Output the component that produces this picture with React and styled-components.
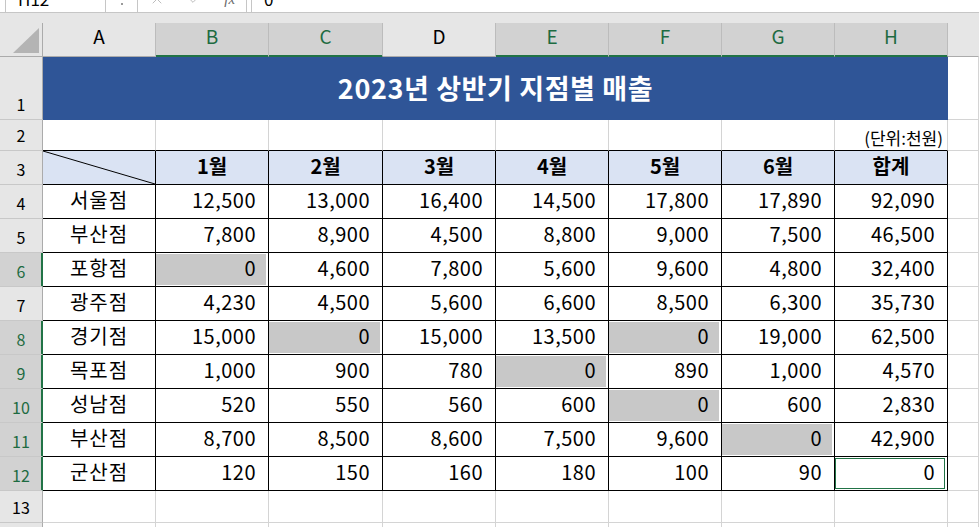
import React from 'react'
import styled, { createGlobalStyle } from 'styled-components'
import { X, Check } from 'lucide-react'

const GREEN = '#217346'
const GREEN_TEXT = '#1D6B41'
const GRID = '#D4D4D4'
const BLACK = '#000'

const GlobalStyle = createGlobalStyle`
  html, body {
    margin: 0;
    padding: 0;
    height: 100%;
    overflow: hidden;
    background: #fff;
  }
  body {
    font-family: "Noto Sans CJK KR", "Noto Sans", sans-serif;
    color: #000;
  }
  #root {
    height: 100%;
    display: flex;
    flex-direction: column;
  }
`

const FormulaBar = styled.div`
  display: flex;
  align-items: flex-end;
  flex-shrink: 0;
  height: 12px;
  overflow: hidden;
  background: #fff;
`

const NameBox = styled.div`
  flex: none;
  box-sizing: border-box;
  width: 101px;
  height: 24px;
  margin-left: 5px;
  padding-left: 12px;
  border: 1px solid #C6C6C6;
  border-bottom: 0;
  font-size: 17px;
  line-height: 20px;
`

const Dots = styled.div`
  flex: none;
  width: 2px;
  height: 2px;
  margin: 0 14px 7px 15px;
  background: #9A9A9A;
`

const IconBox = styled.div`
  flex: none;
  box-sizing: border-box;
  display: flex;
  align-items: flex-start;
  justify-content: space-around;
  width: 110px;
  height: 24px;
  padding-top: 2px;
  border: 1px solid #C6C6C6;
  border-bottom: 0;
  color: #BDBDBD;
`

const Fx = styled.span`
  font-family: "Liberation Serif", serif;
  font-style: italic;
  font-size: 15px;
  line-height: 16px;
  color: #6A6A6A;
`

const FormulaInput = styled.div`
  flex: 1;
  box-sizing: border-box;
  height: 24px;
  margin-left: 4px;
  padding-left: 12px;
  border: 1px solid #C6C6C6;
  border-bottom: 0;
  border-right: 0;
  font-size: 17px;
  line-height: 20px;
`

const Strip = styled.div`
  flex-shrink: 0;
  box-sizing: border-box;
  height: 11px;
  background: #E6E6E6;
  border-top: 1px solid #C6C6C6;
`

const Sheet = styled.div`
  flex: 1;
  min-height: 0;
  display: grid;
  grid-template-columns: 43px 113px 113px 114px 113px 113px 113px 113px 113px 1fr;
  grid-template-rows: 34px 63px 31px 34px repeat(9, 34px) 32px 1fr;
  overflow: hidden;
`

const Corner = styled.div`
  box-sizing: border-box;
  display: flex;
  justify-content: flex-end;
  align-items: flex-end;
  padding: 0 3px 3px 0;
  background: #E6E6E6;
  border-right: 1px solid #ABABAB;
  border-bottom: 1px solid #ABABAB;
`

const ColHead = styled.div`
  box-sizing: border-box;
  display: flex;
  justify-content: center;
  align-items: flex-start;
  padding-top: 3px;
  font-size: 19px;
  line-height: 19px;
  background: ${p => p.$selected ? '#D2D2D2' : '#E6E6E6'};
  color: ${p => p.$selected ? GREEN_TEXT : '#000'};
  border-right: 1px solid ${p => p.$blank ? '#E6E6E6' : '#BCBCBC'};
  border-bottom: 1px solid ${p => p.$selected ? GREEN : '#ABABAB'};
  box-shadow: ${p => p.$selected ? `inset 0 -1px 0 ${GREEN}` : 'none'};
`

const RowHead = styled.div`
  box-sizing: border-box;
  overflow: hidden;
  display: flex;
  justify-content: center;
  align-items: flex-end;
  padding-bottom: 7px;
  font-size: 16px;
  line-height: 16px;
  background: ${p => p.$selected ? '#D2D2D2' : '#E6E6E6'};
  color: ${p => p.$selected ? GREEN_TEXT : '#000'};
  border-right: 1px solid ${p => p.$selected ? GREEN : '#ABABAB'};
  border-bottom: 1px solid #C8C8C8;
  box-shadow: ${p => p.$selected ? `inset -1px 0 0 ${GREEN}` : 'none'};
`

const justify = { left: 'flex-start', center: 'center', right: 'flex-end' }

const Cell = styled.div`
  position: relative;
  box-sizing: border-box;
  overflow: hidden;
  display: flex;
  align-items: ${p => p.$valign === 'bottom' ? 'flex-end' : 'center'};
  justify-content: ${p => justify[p.$align || 'left']};
  padding: 0 ${p => p.$pad || 0}px ${p => p.$valign === 'bottom' ? 2 : 4}px 0;
  font-size: ${p => p.$small ? 17 : 20}px;
  line-height: 20px;
  font-weight: ${p => p.$bold ? 700 : 400};
  letter-spacing: ${p => p.$spaced ? '1px' : p.$num ? '0.5px' : '0'};
  white-space: nowrap;
  background: ${p => p.$fill || '#fff'};
  border-right: 1px solid ${p => p.$rightLine};
  border-bottom: 1px solid ${p => p.$bottomLine};
  box-shadow: ${p => p.$active
    ? `inset 0 1px 0 #fff, inset 0 -1px 0 #fff, inset -2px 0 0 #fff, inset 0 2px 0 ${GREEN}, inset 0 -2px 0 ${GREEN}, inset -3px 0 0 ${GREEN}, inset 1px 0 0 ${GREEN}`
    : p.$fill ? 'inset 0 1px 0 #fff, inset 0 -1px 0 #fff, inset -2px 0 0 #fff' : 'none'};
`

const TitleCell = styled.div`
  grid-column: span 8;
  display: flex;
  align-items: center;
  justify-content: center;
  padding-bottom: 2px;
  background: #2F5597;
  color: #fff;
  font-size: 27px;
  font-weight: 700;
  letter-spacing: 0.6px;
`

const Diagonal = styled.svg`
  position: absolute;
  inset: 0;
  width: 100%;
  height: 100%;
`

const COLS = ['A', 'B', 'C', 'D', 'E', 'F', 'G', 'H']
const SELECTED_COLS = ['B', 'C', 'E', 'F', 'G', 'H']
const SELECTED_ROWS = [6, 8, 9, 10, 11, 12]
const HEAD_FILL = '#DAE3F3'
const ZERO_FILL = '#C8C8C8'

const months = ['1월', '2월', '3월', '4월', '5월', '6월', '합계']

// null marks a blanked (grey) cell that shows 0
const branches = [
  ['서울점', [12500, 13000, 16400, 14500, 17800, 17890, 92090]],
  ['부산점', [7800, 8900, 4500, 8800, 9000, 7500, 46500]],
  ['포항점', [null, 4600, 7800, 5600, 9600, 4800, 32400]],
  ['광주점', [4230, 4500, 5600, 6600, 8500, 6300, 35730]],
  ['경기점', [15000, null, 15000, 13500, null, 19000, 62500]],
  ['목포점', [1000, 900, 780, null, 890, 1000, 4570]],
  ['성남점', [520, 550, 560, 600, null, 600, 2830]],
  ['부산점', [8700, 8500, 8600, 7500, 9600, null, 42900]],
  ['군산점', [120, 150, 160, 180, 100, 90, 0]],
]

const fmt = n => (n || 0).toLocaleString('en-US')

// borders: the table (rows 3-12, A-H) is boxed in black, everything else is grid
const lines = (row, col) => ({
  $rightLine: col < 8 && row >= 3 && row <= 12 ? BLACK : GRID,
  $bottomLine: col < 8 && row >= 2 && row <= 12 ? BLACK : GRID,
})

const App = () => {
  const rows = []

  // row 1: title
  rows.push(<RowHead key="h1">1</RowHead>)
  rows.push(<TitleCell key="title">2023년 상반기 지점별 매출</TitleCell>)
  rows.push(<Cell key="r1x" {...lines(1, 8)} />)

  // row 2: unit label
  rows.push(<RowHead key="h2">2</RowHead>)
  COLS.forEach((c, i) => rows.push(
    i === 7
      ? <Cell key={'r2' + c} {...lines(2, i)} $align="right" $valign="bottom" $pad={4} $small>(단위:천원)</Cell>
      : <Cell key={'r2' + c} {...lines(2, i)} />
  ))
  rows.push(<Cell key="r2x" {...lines(2, 8)} />)

  // row 3: month headers
  rows.push(<RowHead key="h3">3</RowHead>)
  rows.push(
    <Cell key="r3A" {...lines(3, 0)} $fill={HEAD_FILL} style={{ boxShadow: 'none' }}>
      <Diagonal viewBox="0 0 112 33" preserveAspectRatio="none">
        <line x1="0" y1="0" x2="112" y2="33" stroke="#000" strokeWidth="1" />
      </Diagonal>
    </Cell>
  )
  months.forEach((m, i) => rows.push(
    <Cell key={'r3' + m} {...lines(3, i + 1)} $fill={HEAD_FILL} $align="center" $bold style={{ boxShadow: 'none' }}>
      {m}
    </Cell>
  ))
  rows.push(<Cell key="r3x" {...lines(3, 8)} />)

  // rows 4-12: data
  branches.forEach(([name, values], b) => {
    const r = b + 4
    rows.push(<RowHead key={'h' + r} $selected={SELECTED_ROWS.includes(r)}>{r}</RowHead>)
    rows.push(<Cell key={r + 'A'} {...lines(r, 0)} $align="center" $spaced>{name}</Cell>)
    values.forEach((v, i) => rows.push(
      <Cell
        key={r + COLS[i + 1]}
        {...lines(r, i + 1)}
        $align="right"
        $pad={12}
        $num
        $fill={v === null ? ZERO_FILL : undefined}
        $active={r === 12 && i === 6}
      >
        {fmt(v)}
      </Cell>
    ))
    rows.push(<Cell key={r + 'x'} {...lines(r, 8)} />)
  })

  // row 13 and the sliver of row 14
  rows.push(<RowHead key="h13">13</RowHead>)
  for (let i = 0; i < 9; i++) rows.push(<Cell key={'13-' + i} {...lines(13, i)} />)
  rows.push(<RowHead key="h14" />)
  for (let i = 0; i < 9; i++) rows.push(<Cell key={'14-' + i} {...lines(14, i)} />)

  return (
    <>
      <GlobalStyle />
      <FormulaBar>
        <NameBox>H12</NameBox>
        <Dots />
        <IconBox>
          <X size={16} strokeWidth={1.5} />
          <Check size={16} strokeWidth={1.5} />
          <Fx>fx</Fx>
        </IconBox>
        <FormulaInput>0</FormulaInput>
      </FormulaBar>
      <Strip />
      <Sheet>
        <Corner>
          <svg width="26" height="25" viewBox="0 0 26 25">
            <polygon points="0,25 26,25 26,0" fill="#B4B4B4" />
          </svg>
        </Corner>
        {COLS.map(c => (
          <ColHead key={c} $selected={SELECTED_COLS.includes(c)}>{c}</ColHead>
        ))}
        <ColHead $blank />
        {rows}
      </Sheet>
    </>
  )
}

export default App
